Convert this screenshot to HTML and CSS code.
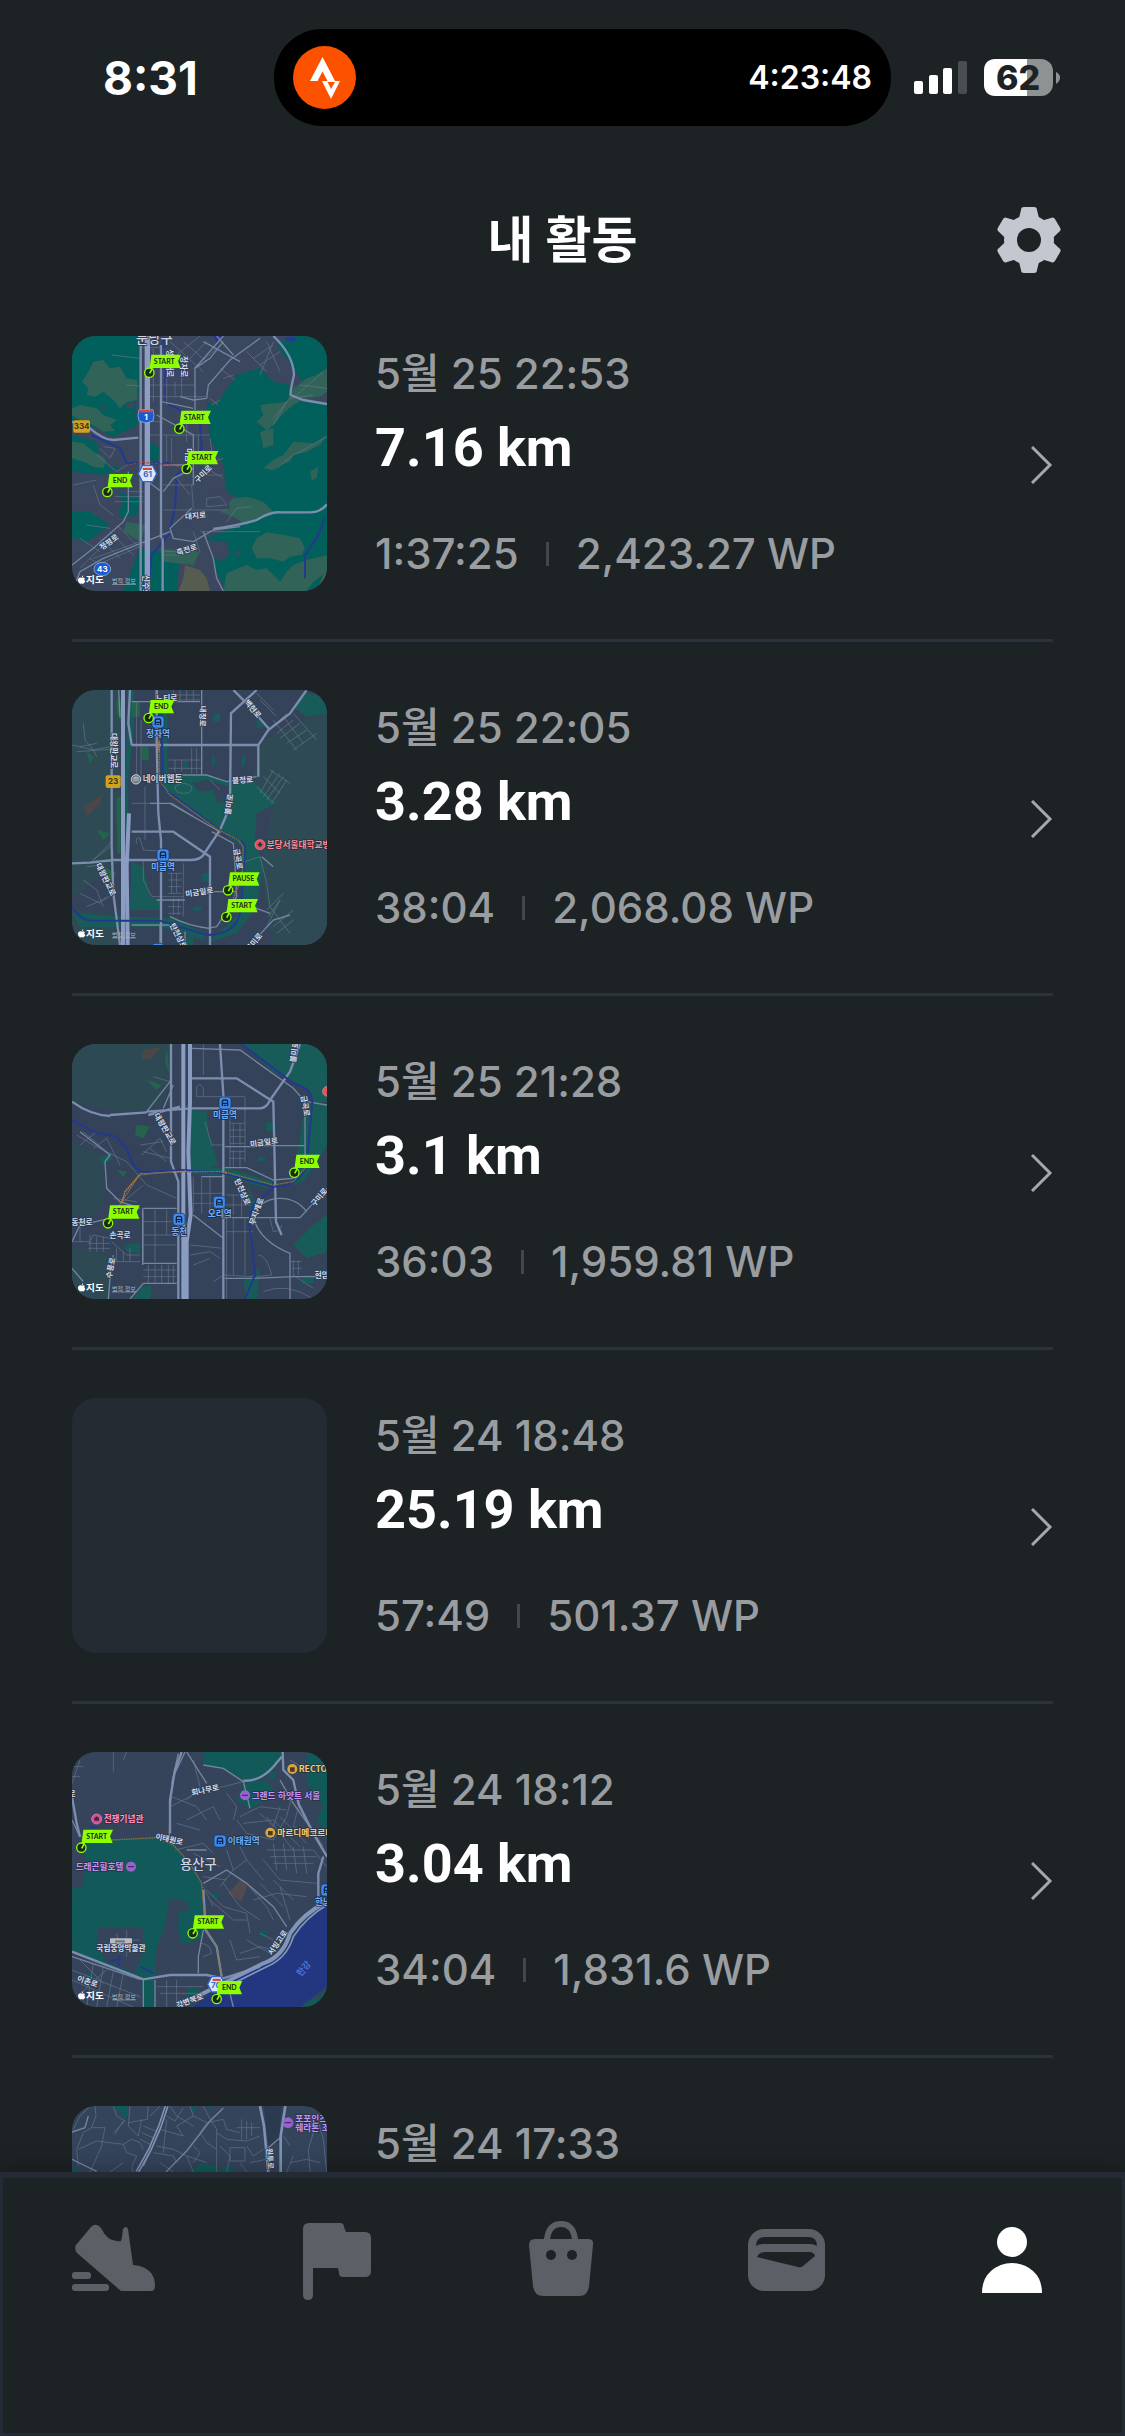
FILE: index.html
```html
<!DOCTYPE html>
<html lang="ko">
  <head>
    <meta charset="utf-8">
    <title>내 활동</title>
    <meta name="viewport" content="width=device-width">
    <link rel="stylesheet" href="styles.css">
  </head>

  <body>
    <!-- shared map parts -->
    <svg class="defs" aria-hidden="true">
      <defs>
        <g id="pin">
          <circle r="14" fill="#1b2a18" stroke="#8dff00" stroke-width="4"/>
          <path d="M1 2 L9 -12" stroke="#8dff00" stroke-width="5"/>
        </g>
        <g id="flag-long">
          <path d="M6 -54 H95 L86 -34 L94 -14 H10 L4 0 L0 -8 Z" fill="#8dff00"/>
          <use href="#pin"/>
        </g>
        <g id="flag-short">
          <path d="M6 -54 H77 L68 -34 L76 -14 H10 L4 0 L0 -8 Z" fill="#8dff00"/>
          <use href="#pin"/>
        </g>
        <g id="station">
          <rect x="-18" y="-18" width="36" height="36" rx="9" fill="#3f8bee" stroke="#16335f" stroke-width="2"/>
          <path d="M-8 10 V-4 Q-8 -9 -3 -9 H3 Q8 -9 8 -4 V10 M-8 1 H8 M-4 7 H4" fill="none" stroke="#10254a" stroke-width="4"/>
        </g>
        <g id="apple">
          <path d="M0 -6 C-5 -9 -11 -6 -11 1 C-11 7 -6 12 -3 11 Q0 10 3 11 C6 12 10 7 11 4 Q6 1 9 -5 Q5 -9 0 -6 Z M0 -7 Q0 -12 5 -14 Q5 -9 0 -7 Z" fill="#fff"/>
        </g>
      </defs>
    </svg>

    <header>
      <div class="status">
        <time class="clock">8:31</time>
        <div class="island">
          <svg class="strava" viewBox="0 0 63 63">
            <circle cx="31.500" cy="31.500" r="31.500" fill="#fc5200"/>
            <path d="M17 35 L29.500 11 L42 35 H34.500 L29.500 25.500 L24.500 35 Z M29 35 H47 L38 53 Z" fill="#fff"/>
            <path d="M34.500 36 H42 L38 43 Z" fill="#fc5200"/>
          </svg>
          <span>4:23:48</span>
        </div>
        <div class="indicators">
          <svg class="signal" viewBox="0 0 53 33">
            <g fill="#fff">
              <rect y="20" width="9" height="13" rx="2"/>
              <rect x="15" y="14" width="9" height="19" rx="2"/>
              <rect x="29" y="7" width="9" height="26" rx="2"/>
            </g>
            <rect x="44" width="9" height="33" rx="2" fill="#494e51"/>
          </svg>
          <svg class="battery" viewBox="0 0 76 37">
            <rect width="69" height="37" rx="12" fill="#8e9293"/>
            <path d="M12 0 H43 V37 H12 Q0 37 0 25 V12 Q0 0 12 0 Z" fill="#fff"/>
            <path d="M72 13 Q76 15 76 18.500 Q76 22 72 25 Z" fill="#8e9293"/>
            <text x="34" y="31" class="level">62</text>
          </svg>
        </div>
      </div>
      <div class="titlebar">
        <h1>내 활동</h1>
        <button class="settings" type="button" aria-label="설정">
          <svg viewBox="-33 -33 66 66">
            <g fill="#c4c7cf">
              <circle r="25"/>
              <path id="tooth" d="M-11 -18 L-8 -30 Q-8 -33 -5 -33 H5 Q8 -33 8 -30 L11 -18 Z"/>
              <use href="#tooth" transform="rotate(60)"/>
              <use href="#tooth" transform="rotate(120)"/>
              <use href="#tooth" transform="rotate(180)"/>
              <use href="#tooth" transform="rotate(240)"/>
              <use href="#tooth" transform="rotate(300)"/>
            </g>
            <circle r="12" fill="#1d2225"/>
          </svg>
        </button>
      </div>
    </header>

    <main>
      <ul class="activities">
        <li>
          <a href="#a1">
            <svg class="map" viewBox="36 33 765 765">
              <rect x="36" y="33" width="765" height="765" fill="#3a475f"/>
              <!-- hills -->
              <path fill="#02605c" d="M36 33 H240 V190 L225 250 L235 300 L160 335 L100 305 L36 290 Z M470 170 L510 180 L530 150 L600 130 L640 170 L690 180 L700 215 L801 240 V798 H500 L470 740 L440 640 L540 600 L580 545 L500 500 L490 420 L450 340 L440 240 Z M700 33 H801 V200 L740 190 L700 130 L650 60 Z M36 330 L110 350 L120 400 L180 430 L130 450 L36 440 Z M36 560 L90 560 L150 600 L80 650 L36 640 Z M255 340 L300 370 L290 415 L260 400 Z M240 670 L360 690 L350 798 L190 798 Z M170 500 L240 520 L230 570 L180 580 Z"/>
              <path fill="#316358" d="M100 110 L130 105 L150 130 L180 125 L200 160 L232 165 V225 L200 232 L180 250 L160 225 L130 200 L105 215 L80 210 L85 190 L66 170 L85 140 Z M60 240 L110 250 L130 270 L170 285 L150 300 L165 318 L130 320 L100 300 L60 285 L36 270 V250 Z M740 160 L770 150 L801 130 V200 L780 215 L740 218 L700 240 L670 265 L640 300 L620 315 L590 290 L610 270 L600 240 L640 235 L680 230 L700 190 Z M600 320 L640 310 L640 360 L610 370 Z M801 330 L780 360 L760 370 L740 380 L700 390 L690 410 L660 420 L640 436 L610 430 L640 405 L670 390 L700 350 L760 355 Z M590 640 L620 622 L660 628 L720 640 L735 670 L725 690 L690 695 L670 710 L630 700 L590 700 L575 670 Z M500 745 L560 720 L590 735 L620 730 L660 770 L680 740 L700 720 L740 705 L801 690 V740 L760 770 L740 798 H490 Z M36 350 L70 355 L100 380 L140 400 L130 430 L100 425 L70 410 L36 400 Z M200 590 L260 600 L240 650 L190 620 Z M520 520 L560 515 L610 530 L640 560 L600 575 L560 600 L520 575 L480 560 Z M300 670 L420 680 L400 720 L310 710 Z M750 440 L775 425 L770 460 L755 465 Z M430 410 L470 440 L440 460 Z"/>
              <path fill="#575c50" d="M375 720 L420 735 L440 760 L450 798 H355 L370 760 Z M790 750 L801 740 V798 H770 Z"/>
              <path fill="#3a475f" d="M80 480 L160 470 L190 540 L150 570 L90 540 Z M440 645 L500 650 L510 690 L480 710 L450 690 Z M440 170 L520 150 L510 175 L470 240 L440 230 Z M460 410 L490 430 L480 470 L430 460 Z M440 510 L500 505 L510 550 L440 570 Z M195 235 L225 230 L220 250 L200 248 Z M120 245 L135 240 L135 255 Z M115 365 L150 370 L190 410 L150 430 Z M525 675 L545 680 L530 695 Z"/>
              <path fill="#26369a" d="M460 33 H490 L470 50 Z M680 35 H705 V50 L675 45 Z"/>
              <path class="river" d="M310 40 L315 230 L420 290 L425 370 L350 450 L345 550 L325 630 L275 690 L265 790 M95 330 L180 370 L200 415 L330 415 M795 580 L770 640 L735 690 L735 760"/>
              <path class="street" d="M240 68 H305 M265 180 H405 M270 215 H440 M240 290 H310 M270 330 H450 M310 480 H400 M310 555 H500 M205 500 H250 M165 515 H250 M165 530 H250 M320 150 V240 M345 170 V215 M365 150 V215 M320 330 V410 M335 340 V410 M270 120 H320 M280 70 V230 M330 50 L430 140 M370 50 L440 110 M350 90 L420 33 M380 110 L440 50 M400 130 L470 70 M560 80 L620 140 M580 100 L640 60 M600 120 L660 80 M620 50 L660 140 M640 50 L600 150 M480 130 L525 165 M490 160 L520 150 M450 220 L475 240 M455 240 L480 225 M100 480 L120 540 L160 570 M40 480 L110 465 M80 600 L150 610 M60 640 L120 680 M120 640 L180 700 M150 620 L220 690 M170 600 L230 660 M90 700 L150 740 M130 660 L60 730 M120 370 L150 400 L165 370 L130 365 M110 390 L170 440 L200 420 M200 180 L240 183 M155 90 L240 100 M400 260 H380 V350 M415 330 V380 M450 340 L460 410 L490 400 M430 450 H490 M440 430 L490 460 M395 480 L400 550 M350 460 L390 510 M440 520 L480 515 L500 540 L440 545 Z M500 590 L530 550 L575 545 M640 280 L690 220 L760 210 M680 230 L640 300 M710 210 L790 140 M720 180 L801 190 M801 335 L740 370 L700 390 L650 430 M310 680 H400 M310 690 H360 M400 620 L420 680 M420 620 H600 M100 700 L240 650 M110 720 L250 660"/>
              <path class="road" d="M405 255 V130 L490 33 M405 130 L450 100 L490 50 M440 220 L445 180 L510 105 L600 40 M430 50 L540 110 M470 33 L520 90 M360 215 L400 225 L440 220 M290 270 L400 330 L400 480 M310 500 L340 460 L400 430 M310 420 H380 M395 550 L330 610 L340 640 L400 650 L460 615 L540 605 M36 720 L100 670 L190 590 L205 560 V440 M45 780 L60 740 L130 700 L330 620 M430 620 L460 700 L470 760 L490 798 M305 230 L400 250 M250 460 L305 500"/>
              <path class="road-main" d="M303 60 V640 M308 640 V798 M640 33 Q700 90 702 150 Q690 200 692 210 L730 225 L801 237 M36 290 L90 310 Q130 345 160 345 L235 338 M460 612 Q540 600 590 585 Q630 560 660 562 H740 Q780 565 801 538"/>
              <path d="M262 33 V798" stroke="#8f9dc4" stroke-width="16"/>
              <path class="road-main" d="M242 60 V798"/>
              <path d="M311 70 V230" stroke="#763a56" stroke-width="3"/>
              <path d="M195 422 L245 412 L320 418 L370 428" fill="none" stroke="#9b4141" stroke-width="3" stroke-dasharray="9 4"/>
              <!-- shields -->
              <rect x="40" y="286" width="50" height="37" rx="5" fill="#d2a21c"/>
              <text x="65" y="312" class="shield dark">334</text>
              <path d="M237 254 H279 Q285 272 279 288 L258 294 L237 288 Q231 272 237 254 Z" fill="#1b5bd0" stroke="#a9c1ee" stroke-width="2"/>
              <path d="M239 254 H277 V262 H239 Z" fill="#d6473c"/>
              <text x="258" y="284" class="shield">1</text>
              <path d="M247 422 H278 L290 446 L278 470 H247 L235 446 Z" fill="#dfe6f5" stroke="#2f69cf" stroke-width="4"/>
              <path d="M248 428 H276 V435 H248 Z" fill="#d6473c"/>
              <text x="263" y="457" class="shield blue">61</text>
              <ellipse cx="127" cy="732" rx="25" ry="20" fill="#1b5bd0" stroke="#a9c1ee" stroke-width="2"/>
              <text x="127" y="741" class="shield">43</text>
              <!-- names -->
              <text x="283" y="53" class="city">분당구</text>
              <text class="street-name" transform="translate(320 115) rotate(90)">성남대로</text>
              <text class="street-name" transform="translate(364 125) rotate(90)">정자로</text>
              <text class="street-name" transform="translate(379 390) rotate(90)">미금</text>
              <text class="street-name" transform="translate(435 452) rotate(-45)">구미로</text>
              <text class="street-name" transform="translate(407 580) rotate(-6)">대지로</text>
              <text class="street-name" transform="translate(383 682) rotate(-18)">죽전로</text>
              <text class="street-name" transform="translate(152 658) rotate(-36)">정평로</text>
              <text class="street-name" transform="translate(250 782) rotate(90)">신수로</text>
              <use href="#apple" x="65" y="765"/>
              <text x="78" y="775" class="brand">지도</text>
              <text x="156" y="774" class="legal">법적 정보</text>
              <use href="#flag-long" x="268" y="143"/>
              <text x="313" y="116" class="pin-name">START</text>
              <use href="#flag-long" x="358" y="311"/>
              <text x="403" y="284" class="pin-name">START</text>
              <use href="#flag-long" x="380" y="432"/>
              <text x="426" y="405" class="pin-name">START</text>
              <use href="#flag-short" x="142" y="501"/>
              <text x="180" y="474" class="pin-name">END</text>
            </svg>
            <div class="info">
              <span class="date">5월 25 22:53</span>
              <strong>7.16 km</strong>
              <span class="stats"><span>1:37:25</span><i></i><span>2,423.27 WP</span></span>
            </div>
            <svg class="chevron" viewBox="1 -1 22 40"><path d="M2 2 L20 20 L2 38"/></svg>
          </a>
        </li>

        <li>
          <a href="#a2">
            <svg class="map" viewBox="36 30 765 765">
              <rect x="36" y="30" width="765" height="765" fill="#34435a"/>
              <path fill="#2e4b55" d="M36 30 H180 V470 L150 560 L60 640 L36 640 Z M610 180 L801 90 V795 H640 L600 560 L640 380 L580 290 Z M36 690 L150 700 L180 795 H36 Z"/>
              <path fill="#185c5a" d="M202 30 H222 L222 130 L205 300 V430 L195 540 V400 Z M303 60 H322 V290 L440 285 L520 310 L580 300 L650 370 L590 400 L585 480 L610 560 L590 680 L530 760 L440 790 L540 700 L545 500 L310 330 Z M215 545 L250 560 L270 650 L300 660 V690 L210 690 Z M740 40 L801 50 V100 L740 110 L700 80 Z M36 700 L210 710 L330 715 L440 760 L430 780 L300 740 L60 740 Z M590 100 L620 140 L590 145 Z M455 230 H466 V255 H455 Z M545 228 H555 V255 H545 Z M370 243 H384 V263 H370 Z M460 100 H480 V125 H460 Z M425 580 H448 V605 H425 Z M400 680 H425 V693 H400 Z M365 770 H400 V795 H365 Z"/>
              <path fill="#34435a" d="M395 310 L440 300 L510 320 L515 380 L500 370 L470 365 L460 330 L420 335 Z"/>
              <path fill="#25644c" d="M216 66 H240 V110 H216 Z M245 200 H266 V240 H245 Z M170 60 H185 V130 L170 100 Z M80 215 L100 230 L90 250 Z M110 450 L150 460 L130 480 Z M130 560 L170 580 L150 600 Z M170 350 H182 V520 H172 Z"/>
              <path fill="#4b4648" d="M72 380 L130 340 L120 370 L80 410 Z"/>
              <path class="street" d="M325 60 H420 M325 45 H420 M340 30 V60 M360 30 V60 M380 30 V60 M400 30 V60 M325 240 H425 M345 240 V275 M365 240 V275 M395 205 V280 M410 205 V280 M325 265 H425 M215 370 H300 M230 65 V300 M243 120 V300 M255 320 V480 M250 510 L330 515 M250 545 V600 L275 650 H370 M325 580 H365 M325 600 H365 M325 620 H365 M325 640 H365 M335 580 V640 M350 580 V640 M325 660 H365 M325 680 H365 M325 700 H365 M340 655 V705 M355 655 V705 M370 550 V710 M230 490 Q225 470 240 475 L250 510 M345 320 Q370 300 395 320 Q400 340 370 340 Q345 340 345 320 M450 300 L480 330 M36 195 L100 210 L150 200 M60 200 L110 190 M50 215 L150 208 M70 130 L75 180 L100 210 L110 230 M100 540 L150 500 M90 550 L160 480 M110 540 L140 610 M80 560 L130 555 M70 600 L110 630 L130 680 M80 680 L150 650 M60 640 L120 670 L140 650 M640 140 L680 100 M650 160 L700 120 M660 175 L720 130 M680 190 L740 150 M700 210 L770 160 M640 120 L710 210 M670 110 L730 190 M700 100 L770 180 M600 60 L650 110 M590 40 L640 90 M600 340 L640 270 M610 350 L660 280 M620 360 L670 290 M635 370 L680 300 M590 320 L640 370 M610 290 L660 340 M630 270 L690 310 M620 690 L670 640 M625 710 L660 660 M640 740 L700 690 M650 760 L700 720 M630 680 L690 760 M660 660 L620 740 M540 550 L600 530 L620 610 L630 680"/>
              <path class="road" d="M215 65 H420 M425 30 V285 M455 455 L520 490 L525 560 L530 650 L470 740 L440 745 M290 660 H375 M215 735 H330 M330 710 Q390 740 450 745 M330 370 L470 450 M300 285 H440 L500 305 L590 290 M455 635 H530 M300 735 V795 M375 755 V795 M270 370 H335 L400 410 M210 30 V65 M520 660 L630 700 M570 795 L640 720 L690 705 M640 560 L605 530 M180 110 L176 30"/>
              <path class="road-main" d="M215 195 H595 M290 30 V190 L295 400 L303 480 V795 M215 455 H340 L450 530 V795 M36 550 L90 548 L160 540 H390 Q420 540 430 525 L480 450 L510 380 L513 100 L590 30 M595 290 V195 L625 150 L690 100 L740 30 M520 30 L560 70 L630 150 M155 30 V500 L160 640 L180 795 M210 30 L205 130 L215 195"/>
              <path d="M189 30 V795 M207 400 L200 560 L203 795" fill="none" stroke="#8b9cc3" stroke-width="12"/>
              <path class="river" d="M36 680 Q60 725 110 722 L300 722 L440 765 Q530 765 543 690 L555 500 Q550 480 500 465 L310 325 L303 60"/>
              <path class="track" d="M297 110 L298 300 L330 345 L475 450 L535 480 L550 500 L547 590 L500 705"/>
              <path class="track hot" d="M297 185 V215 M470 450 L482 460"/>
              <rect x="137" y="286" width="45" height="38" rx="6" fill="#d2a21c"/>
              <text x="159" y="313" class="shield dark">23</text>
              <text class="street-name" transform="translate(320 62)">느티로</text>
              <text class="street-name" transform="translate(420 108) rotate(92)">내정로</text>
              <text class="street-name" transform="translate(572 92) rotate(50)">백현로</text>
              <text class="street-name" transform="translate(152 212) rotate(90)">대왕판교로</text>
              <text class="street-name" transform="translate(130 602) rotate(64)">대왕판교로</text>
              <text class="street-name" transform="translate(548 308) rotate(-4)">불정로</text>
              <text class="street-name" transform="translate(515 374) rotate(-82)">불미로</text>
              <text class="street-name" transform="translate(526 538) rotate(80)">금곡로</text>
              <text class="street-name" transform="translate(419 644) rotate(-8)">미금일로</text>
              <text class="street-name" transform="translate(348 772) rotate(62)">탄천상로</text>
              <text class="street-name" transform="translate(588 792) rotate(-50)">구미로</text>
              <circle cx="228" cy="298" r="14" fill="#6d7784" stroke="#c6ccd6" stroke-width="3"/>
              <path d="M222 304 V292 H234 V304 M228 294 V304" fill="none" stroke="#e3e6ec" stroke-width="2"/>
              <text x="248" y="307" class="place">네이버웹툰</text>
              <use href="#station" x="294" y="126"/>
              <text x="294" y="171" class="station-name">정자역</text>
              <use href="#station" x="309" y="525"/>
              <text x="309" y="570" class="station-name">미금역</text>
              <use href="#station" x="294" y="808"/>
              <circle cx="600" cy="494" r="15" fill="#e0525f" stroke="#f0939a" stroke-width="2"/>
              <path d="M593 494 H607 M600 487 V501" stroke="#2a2f3c" stroke-width="5"/>
              <text x="620" y="503" class="place red">분당서울대학교병원</text>
              <use href="#apple" x="65" y="761"/>
              <text x="78" y="771" class="brand">지도</text>
              <text x="156" y="770" class="legal">법적 정보</text>
              <use href="#flag-short" x="266" y="114"/>
              <text x="304" y="87" class="pin-name">END</text>
              <use href="#flag-long" x="504" y="631"/>
              <text x="550" y="604" class="pin-name">PAUSE</text>
              <use href="#flag-long" x="499" y="711"/>
              <text x="545" y="684" class="pin-name">START</text>
            </svg>
            <div class="info">
              <span class="date">5월 25 22:05</span>
              <strong>3.28 km</strong>
              <span class="stats"><span>38:04</span><i></i><span>2,068.08 WP</span></span>
            </div>
            <svg class="chevron" viewBox="1 -1 22 40"><path d="M2 2 L20 20 L2 38"/></svg>
          </a>
        </li>

        <li>
          <a href="#a3">
            <svg class="map" viewBox="36 27 765 765">
              <rect x="36" y="27" width="765" height="765" fill="#34435a"/>
              <path fill="#2d4a54" d="M36 27 H330 V150 L300 210 L200 235 L36 200 Z M36 320 L130 370 L130 500 L100 540 L36 540 Z M36 640 L150 650 L150 792 H36 Z"/>
              <path fill="#185c5a" d="M395 225 L440 230 L445 290 L475 390 L440 400 L390 400 L385 300 Z M545 27 H801 V200 L760 205 L750 165 L640 110 Z M735 200 L801 210 V330 L760 400 L730 440 L700 450 Z M390 395 L500 400 L640 440 L620 460 L500 425 L390 415 Z M700 630 L760 570 L801 540 V650 L740 670 Z M565 440 L580 500 L600 510 L570 550 Z M245 755 L275 750 L270 792 H220 Z M115 370 L150 355 L160 370 L130 390 Z M550 740 L600 700 L590 792 H560 Z M190 630 L240 625 V655 L200 650 Z M618 262 H640 V288 H618 Z M595 365 H615 V378 H595 Z M730 720 H760 V745 H725 Z"/>
              <path fill="#25644c" d="M320 40 L330 120 L315 80 Z M260 135 L305 150 L290 165 Z M170 405 L200 410 L190 425 Z M230 270 L270 275 L250 310 L225 300 Z"/>
              <path fill="#4b4648" d="M250 45 L305 35 L270 75 L245 70 Z"/>
              <path class="street" d="M430 27 V120 M410 155 Q420 140 430 160 V185 L410 185 Z M430 185 H555 V380 M435 260 L455 330 H490 M510 265 H555 M510 285 H555 M510 305 H555 M510 325 H555 M520 265 V330 M540 265 V330 M510 350 H555 M510 370 H555 M520 345 V395 M540 345 V395 M510 240 V400 M250 350 L330 370 M245 360 L300 310 L320 350 M240 330 L310 320 M270 340 L320 380 M200 380 L260 450 L350 490 M60 330 L110 290 M100 340 L140 310 L180 390 M50 300 L100 330 L200 380 M140 350 L70 290 M160 490 L230 500 M190 500 L250 450 M36 620 H90 L100 600 L150 610 M90 600 V650 M110 605 V650 M130 605 V650 M60 570 V620 M85 625 H150 M85 640 H150 M155 620 L200 660 H240 M170 640 V680 M190 650 V680 M210 640 V680 M155 680 H240 M250 530 V680 M285 525 V680 M320 525 V600 M250 560 H350 M250 600 H350 M250 630 H350 M265 690 V745 M285 690 V745 M305 690 V745 M325 690 V745 M340 690 V745 M250 705 H350 M250 725 H350 M400 425 V530 M425 425 V535 M450 425 V530 M400 475 H490 M400 505 H490 M390 630 L490 640 M390 660 L450 650 L480 670 M400 690 L450 670 M460 740 L490 720 L580 725 M500 480 H560 M520 480 V540 M545 490 V550 M495 510 H570 M500 545 V790 M520 550 V720 M555 550 V720 M500 590 H580 M595 660 Q620 660 635 720 L590 725 M630 550 L640 590 Q660 590 665 570 M690 680 H725 M700 675 V720 M715 675 V720 M695 700 H725 M700 720 L760 760 M610 770 Q680 740 760 792 M280 125 L330 140"/>
              <path class="road" d="M395 40 L540 45 L700 160 L735 200 V370 M590 332 H735 M495 335 H590 M425 425 H490 M495 398 H560 L640 435 L700 430 M580 548 Q600 490 660 490 Q710 490 740 530 M580 548 Q600 620 690 655 V792 M495 548 H720 L801 460 M250 520 H350 M248 520 V690 M160 660 L150 730 L145 792 M36 620 L60 570 L150 550 M135 380 L140 460 L180 500 L240 520 M60 290 L150 360 L135 380 M495 730 H580 L700 725 L790 725 M740 200 L801 210 M250 685 H350 M250 745 H350 M210 792 L250 745 M310 220 L340 150 M260 230 L330 140 M36 700 L70 740 M240 415 L340 410 M400 540 L490 610"/>
              <path class="road-main" d="M395 130 H530 L640 200 L648 560 L665 600 M480 27 L490 180 V792 M395 220 H600 Q620 220 630 195 L690 110 L720 27 M36 200 Q90 240 150 243 M260 230 L395 220 M333 27 V380 L355 440 V792 M150 240 L260 232 M265 240 L360 215"/>
              <path d="M370 27 V792 M390 27 V200 L385 350 L392 540 L380 620 V792" fill="none" stroke="#8b9cc3" stroke-width="12"/>
              <path class="river" d="M36 255 L100 290 L170 305 L200 340 L220 390 L245 412 L370 405 L490 415 L560 435 L640 455 Q720 455 740 390 L757 200 Q755 160 700 145 L545 27 M640 460 L580 510 Q560 560 575 620 L585 720 L555 792"/>
              <path class="track" d="M150 555 L185 500 L238 420 L340 410 L490 410 L640 450 L700 440 L735 400"/>
              <path class="track hot" d="M185 505 L195 470 L238 420 M338 412 L380 408 M488 412 L500 414"/>
              <text class="street-name" transform="translate(711 52) rotate(-82)">불미로</text>
              <text class="street-name" transform="translate(728 214) rotate(80)">금곡로</text>
              <text class="street-name" transform="translate(308 286) rotate(60)">대왕판교로</text>
              <text class="street-name" transform="translate(613 330) rotate(-8)">미금일로</text>
              <text class="street-name" transform="translate(540 474) rotate(66)">탄천상로</text>
              <text class="street-name" transform="translate(597 532) rotate(-70)">무지개로</text>
              <text class="street-name" transform="translate(784 492) rotate(-50)">구미로</text>
              <text class="street-name" transform="translate(66 570)">동천로</text>
              <text class="street-name" transform="translate(180 608)">손곡로</text>
              <text class="street-name" transform="translate(160 700) rotate(-78)">수풍로</text>
              <text class="street-name" transform="translate(796 728)">현암로</text>
              <use href="#station" x="495" y="204"/>
              <text x="495" y="248" class="station-name">미금역</text>
              <use href="#station" x="478" y="502"/>
              <text x="479" y="547" class="station-name">오리역</text>
              <use href="#station" x="357" y="553"/>
              <text x="358" y="599" class="station-name">동천</text>
              <circle cx="803" cy="169" r="15" fill="#e0525f" stroke="#f0939a" stroke-width="2"/>
              <use href="#apple" x="65" y="758"/>
              <text x="78" y="768" class="brand">지도</text>
              <text x="156" y="767" class="legal">법적 정보</text>
              <use href="#flag-short" x="703" y="413"/>
              <text x="741" y="386" class="pin-name">END</text>
              <use href="#flag-long" x="144" y="565"/>
              <text x="190" y="538" class="pin-name">START</text>
            </svg>
            <div class="info">
              <span class="date">5월 25 21:28</span>
              <strong>3.1 km</strong>
              <span class="stats"><span>36:03</span><i></i><span>1,959.81 WP</span></span>
            </div>
            <svg class="chevron" viewBox="1 -1 22 40"><path d="M2 2 L20 20 L2 38"/></svg>
          </a>
        </li>

        <li>
          <a href="#a4">
            <div class="map"></div>
            <div class="info">
              <span class="date">5월 24 18:48</span>
              <strong>25.19 km</strong>
              <span class="stats"><span>57:49</span><i></i><span>501.37 WP</span></span>
            </div>
            <svg class="chevron" viewBox="1 -1 22 40"><path d="M2 2 L20 20 L2 38"/></svg>
          </a>
        </li>

        <li>
          <a href="#a5">
            <svg class="map" viewBox="36 36 765 765">
              <rect x="36" y="36" width="765" height="765" fill="#35445a"/>
              <path fill="#125a59" d="M75 300 L290 295 L340 315 L390 370 L425 430 L432 590 L370 615 L355 580 V510 L325 500 L315 560 L290 620 L285 710 L250 712 L200 700 L36 630 V445 L65 445 L80 380 Z M430 36 H665 L650 80 L600 120 L550 120 L490 85 L432 75 Z M555 125 L620 120 L640 150 L600 190 L570 205 L530 180 Z M740 36 H801 V300 L770 240 L790 200 L740 130 Z M630 95 H648 V120 H630 Z M455 460 L475 458 L480 475 L460 478 Z M598 572 H622 V590 H598 Z M385 740 L415 745 L410 790 L380 790 Z M80 700 L100 705 L95 720 L80 715 Z M245 720 H285 V801 H250 Z"/>
              <path fill="#35445a" d="M115 562 H248 V640 L225 700 L140 670 L110 610 Z M325 475 L385 485 V510 L330 520 Z"/>
              <path fill="#514a51" d="M505 460 L540 420 L565 430 L545 485 Z"/>
              <!-- Han river -->
              <path fill="#22377f" d="M801 490 L760 520 L710 570 L670 640 L500 720 L400 801 H720 L801 740 Z"/>
              <path fill="#125a59" d="M730 790 L780 770 L801 740 V801 H735 Z"/>
              <path class="river" d="M90 262 H110 M145 665 L170 660 M260 690 L275 695 M180 645 L175 680 M240 680 L280 700"/>
              <path class="street" d="M160 36 V95 M200 36 L190 60 M36 130 L60 60 M36 110 H60 M36 80 H70 M330 200 L410 160 L550 125 M335 170 L410 200 L440 240 M400 60 L420 140 L380 180 M380 240 L460 200 L480 240 M350 250 L420 270 M345 330 L430 310 L460 340 M500 160 L530 200 L520 240 M540 230 L600 200 L680 210 M550 250 L640 240 M530 240 L560 280 L640 300 M600 220 L640 260 L660 200 M620 230 L700 330 M640 240 L720 320 M660 230 L740 310 M620 330 H760 M630 350 H770 M640 370 H760 M640 310 L650 390 M670 310 L680 390 M700 320 L710 400 M730 320 L740 400 M610 360 L660 420 L770 430 M500 330 L520 390 L480 440 M520 390 L560 360 L610 420 M560 360 L540 320 M440 450 L490 500 L560 520 L570 580 M450 480 L520 540 H560 M430 440 L460 500 M490 430 L540 500 L600 540 M560 430 L620 500 L640 540 M600 430 L670 500 M640 420 L700 480 M660 440 L690 540 M580 480 L650 460 L740 470 M600 580 L640 600 M560 600 L630 640 M540 640 L600 620 L640 630 M510 600 L530 660 L600 650 M420 610 Q450 610 455 640 L430 650 M430 410 L500 420 M400 340 L480 380 M60 660 L130 730 M100 670 L80 801 M130 680 L110 801 M160 695 L140 801 M36 690 L240 770 M36 720 L220 801 M190 700 L170 801 M290 740 H430 M300 760 H420 M320 720 V801 M350 720 V801 M60 760 L140 690 M170 580 L180 640 M200 570 V650 M160 600 H240 M690 60 L740 90 M700 150 L680 230 L640 300 M720 180 L700 260 L760 290 M740 240 L790 320 M760 330 L800 380"/>
              <path class="road" d="M375 36 L340 110 L330 200 L328 290 M355 40 L335 130 M430 75 L490 85 L550 125 L570 205 M440 330 H380 M430 430 L500 390 L560 430 L640 500 L680 560 M430 570 L415 650 V700 M36 240 L60 290 M36 650 L240 718 M660 120 L700 190 L770 290 M285 720 V801 M250 720 V801 M500 720 L520 801 M380 36 L440 130"/>
              <path class="road-main" d="M365 36 L345 90 L330 180 V280 M550 122 Q600 125 640 80 L665 50 M668 36 L670 90 L700 120 L715 190 L760 280 L801 350 M36 635 L250 718 L330 705 H440 L490 715 L600 680 M36 170 L50 250 L60 290 M775 480 V400 L790 350 M430 450 L437 570 L470 620 L485 710"/>
              <path d="M801 485 Q730 520 690 580 Q670 650 610 670 L490 730 L360 795" fill="none" stroke="#8295b8" stroke-width="12"/>
              <path d="M801 495 Q740 530 700 590 Q680 655 620 680 L500 740" fill="none" stroke="#8295b8" stroke-width="5"/>
              <path class="track" d="M100 303 L290 293 L340 315 L390 370 L425 430 L437 570 L470 620 L485 705"/>
              <path d="M455 710 H483 L495 733 L483 756 H455 L443 733 Z" fill="#dfe6f5" stroke="#2f69cf" stroke-width="4"/>
              <path d="M458 716 H482 V723 H458 Z" fill="#d6473c"/>
              <text x="468" y="744" class="shield blue">70</text>
              <text class="street-name" transform="translate(437 158) rotate(-12)">회나무로</text>
              <text class="street-name" transform="translate(326 306) rotate(12)">이태원로</text>
              <text class="street-name" transform="translate(80 732) rotate(18)">이촌로</text>
              <text class="street-name" transform="translate(392 790) rotate(-20)">강변북로</text>
              <text class="street-name" transform="translate(660 612) rotate(-56)">서빙고로</text>
              <text class="street-name" transform="translate(36 170)">로</text>
              <text class="water" transform="translate(738 692) rotate(-50)">한강</text>
              <text x="415" y="387" class="city">용산구</text>
              <rect x="150" y="595" width="66" height="17" rx="2" fill="#b9bdc2"/>
              <path d="M165 604 H195" stroke="#70777f" stroke-width="7"/>
              <text class="street-name" transform="translate(183 634)">국립중앙박물관</text>
              <circle cx="110" cy="237" r="15" fill="#d54f95" stroke="#f08cc0" stroke-width="2"/>
              <path d="M103 242 V234 L110 229 L117 234 V242 Z" fill="#49233f"/>
              <text x="131" y="246" class="place pink">전쟁기념관</text>
              <text x="47" y="390" class="place purple">드래곤힐호텔</text>
              <circle cx="213" cy="380" r="15" fill="#9a62cf"/>
              <path d="M204 380 H222" stroke="#4a2b6b" stroke-width="4"/>
              <circle cx="555" cy="166" r="15" fill="#9a62cf"/>
              <path d="M546 166 H564" stroke="#4a2b6b" stroke-width="4"/>
              <text x="575" y="176" class="place purple">그랜드 하얏트 서울</text>
              <circle cx="697" cy="87" r="15" fill="#d9a545"/>
              <path d="M690 82 H704 V95 H690 Z" fill="#4b3a1d"/>
              <text x="716" y="97" class="place gold">RECTO</text>
              <circle cx="631" cy="278" r="15" fill="#d9a545"/>
              <path d="M624 273 H638 V286 H624 Z" fill="#4b3a1d"/>
              <text x="652" y="287" class="place gold">마르디메크르디</text>
              <use href="#station" x="480" y="303"/>
              <text x="551" y="312" class="station-name">이태원역</text>
              <use href="#station" x="801" y="450"/>
              <text x="801" y="495" class="station-name">한남역</text>
              <use href="#apple" x="65" y="767"/>
              <text x="78" y="777" class="brand">지도</text>
              <text x="156" y="776" class="legal">법적 정보</text>
              <use href="#flag-long" x="64" y="323"/>
              <text x="110" y="296" class="pin-name">START</text>
              <use href="#flag-long" x="398" y="580"/>
              <text x="444" y="553" class="pin-name">START</text>
              <use href="#flag-short" x="470" y="777"/>
              <text x="508" y="750" class="pin-name">END</text>
            </svg>
            <div class="info">
              <span class="date">5월 24 18:12</span>
              <strong>3.04 km</strong>
              <span class="stats"><span>34:04</span><i></i><span>1,831.6 WP</span></span>
            </div>
            <svg class="chevron" viewBox="1 -1 22 40"><path d="M2 2 L20 20 L2 38"/></svg>
          </a>
        </li>

        <li>
          <a href="#a6">
            <svg class="map" viewBox="36 30 765 765">
              <rect x="36" y="30" width="765" height="765" fill="#34445b"/>
              <path fill="#125a59" d="M165 30 H200 L205 60 L190 68 L180 45 L162 42 Z M400 30 H412 L400 55 L392 50 Z M440 30 H455 L445 38 Z M385 228 L425 203 L470 208 V228 Z M485 213 L520 212 V228 H485 Z M36 212 L70 228 H36 Z"/>
              <path fill="#2c3a4f" d="M612 30 H665 L655 140 L625 150 Z"/>
              <path class="street" d="M90 30 L60 60 L40 100 M105 30 L108 60 L95 95 L70 110 L50 160 L55 210 M95 95 H135 L125 150 L90 228 M55 160 L110 135 L190 145 L215 130 L240 140 L250 160 M160 30 L170 60 L195 75 L160 110 M190 75 L180 90 L165 115 M210 30 L205 90 L235 120 L245 70 M265 30 L262 70 L205 80 M190 145 L200 170 L230 180 L215 215 L220 228 M270 60 L300 30 M250 90 L300 110 M245 110 L290 130 M240 130 L280 150 M330 30 L350 60 L400 90 M320 60 L345 75 L370 35 M300 100 L370 120 L350 90 L400 60 L390 30 M320 70 L310 170 M290 150 L340 160 L380 180 L440 200 M280 170 L340 180 L350 200 M400 60 L440 80 L490 70 M430 30 L445 60 L470 100 V228 M440 80 L420 110 L440 140 L470 160 M470 110 L500 130 L560 135 L600 120 M490 70 L500 100 L540 110 M545 70 V130 M560 75 V130 M575 80 V120 M530 95 H600 M510 155 H555 V195 H510 Z M480 150 L510 180 L500 228 M400 150 L420 170 L400 200 M380 180 L400 228 M560 150 L580 180 L610 160 M570 200 L620 190 M540 200 L560 228 M750 60 L760 110 L745 160 L750 228 M770 60 L790 130 L800 228 M690 200 L740 190 L780 200 M670 120 L690 150 M680 228 L700 180 M300 200 L340 228 M150 228 L190 200"/>
              <path class="road" d="M36 108 L75 95 L85 60 M36 190 L110 226 M318 228 L380 165 L450 75 L490 36 M250 210 L300 100 M625 155 L660 125"/>
              <path d="M320 30 L300 90 L270 160 L232 228" fill="none" stroke="#8293b4" stroke-width="12"/>
              <path d="M320 30 L300 90 L270 160 L232 228" fill="none" stroke="#3a4a63" stroke-width="3"/>
              <path d="M600 30 L612 90 L625 228 M676 30 L662 120 V228" fill="none" stroke="#7f91b3" stroke-width="8"/>
              <text class="street-name" transform="translate(622 188) rotate(86)">원투로</text>
              <circle cx="684" cy="80" r="16" fill="#9a62cf"/>
              <path d="M674 80 H694" stroke="#4a2b6b" stroke-width="4"/>
              <text x="706" y="77" class="place purple">포포인츠</text>
              <text x="706" y="104" class="place purple">쉐라톤 조선</text>
            </svg>
            <div class="info">
              <span class="date">5월 24 17:33</span>
            </div>
          </a>
        </li>
      </ul>
    </main>

    <nav>
      <a href="#run" aria-label="운동">
        <svg viewBox="0 0 84 84">
          <path d="M4 27 L19 9 Q24 4 29 10 Q36 25 49 23 Q50 20 51 11 Q54 7 56 11 L61 47 Q83 49 83 68 Q83 73 79 73 H49 L5 35 Q2 31 4 27 Z"/>
          <rect y="54" width="19" height="7" rx="3"/>
          <rect y="66" width="37" height="7" rx="3"/>
        </svg>
      </a>
      <a href="#challenge" aria-label="챌린지">
        <svg viewBox="0 0 84 84">
          <path d="M7 11 Q7 5 13 5 H44 Q48 5 48 9 L50 14 H69 Q75 14 75 20 V53 Q75 59 69 59 H47 Q43 59 43 55 L42 50 H17 V77 Q17 82 12 82 Q7 82 7 77 Z"/>
        </svg>
      </a>
      <a href="#shop" aria-label="상점">
        <svg viewBox="0 0 84 84">
          <path d="M26 24 V21 Q28 6 40 6 Q52 6 54 21 V24" fill="none" stroke="#5a6066" stroke-width="6"/>
          <path d="M14 21 H67 Q73 21 72 27 L68 68 Q67 78 58 78 H23 Q13 78 12 68 L8 27 Q8 21 14 21 Z"/>
          <circle cx="30" cy="37" r="5" fill="#1d2225"/>
          <circle cx="51" cy="37" r="5" fill="#1d2225"/>
        </svg>
      </a>
      <a href="#wallet" aria-label="지갑">
        <svg viewBox="0 0 84 84">
          <rect x="3" y="11" width="77" height="62" rx="16"/>
          <path d="M11 28 Q11 19 20 19 H63 Q72 19 72 28 Q69 26 65 26 H18 Q14 26 11 28 Z M12 39 Q14 34 20 34 H64 Q69 34 70 38 L58 48 Q56 50 53 49 Z" fill="#1d2225"/>
        </svg>
      </a>
      <a href="#me" class="active" aria-label="내 정보">
        <svg viewBox="0 0 84 84">
          <circle cx="43" cy="24" r="15"/>
          <path d="M13 75 Q13 61 22 53 Q31 45 43 45 Q55 45 64 53 Q73 61 73 75 Z"/>
        </svg>
      </a>
    </nav>
  </body>
</html>
```

FILE: styles.css
```css
* { box-sizing: border-box; }
body { margin: 0; height: 100vh; display: flex; flex-direction: column;
     background-color: #1d2225; color: #fff;
     font-family: Inter, "Noto Sans CJK KR", sans-serif; }
a { color: inherit; text-decoration: none; }
svg { display: block; flex: none; }
.defs { position: absolute; width: 0; height: 0; }

/* status bar */
.status { display: flex; align-items: center; padding: 29px 65px 0 103px; }
.clock { width: 171px; font-size: 46px; font-weight: 700; line-height: 96px; }
.island { flex: 1; display: flex; align-items: center; justify-content: space-between;
     height: 97px; padding: 0 19px; border-radius: 48px; background-color: #000;
     font-size: 32px; font-weight: 600; }
.strava { width: 63px; height: 63px; }
.indicators { display: flex; align-items: center; gap: 17px; padding-left: 23px; }
.signal { width: 53px; height: 33px; }
.battery { width: 76px; height: 37px; overflow: visible; }
.level { font-size: 34px; font-weight: 800; text-anchor: middle; fill: #1d2225; }

/* title */
.titlebar { display: grid; grid-template-columns: 66px 1fr 66px; align-items: center;
     padding: 48px 63px 30px; height: 210px; }
.titlebar h1 { grid-column: 2; margin: 0; text-align: center; font-size: 50px;
     font-weight: 700; line-height: 80px; }
.settings { width: 66px; height: 66px; padding: 0; border: 0; background: none; }

/* list */
main { flex: 1; min-height: 0; overflow: hidden; padding: 0 72px; }
.activities { margin: 0; padding: 0; list-style: none; }
.activities li { padding-bottom: 48px; margin-bottom: 48px; border-bottom: 3px solid #2b323b; }
.activities a { display: flex; align-items: center; gap: 48px; }
.map { width: 255px; height: 255px; border-radius: 24px; background-color: #252b33; }
.info { flex: 1; display: flex; flex-direction: column; height: 255px; padding-top: 2px; }
.date { font-size: 42px; font-weight: 500; line-height: 72px; color: #999da0; }
.info strong { font-family: Roboto, sans-serif; font-size: 54px; font-weight: 700; line-height: 76px; }
.stats { display: flex; align-items: center; gap: 27px; margin-top: 32px;
     font-size: 42px; font-weight: 500; line-height: 72px; color: #999da0; }
.stats i { width: 3px; height: 24px; background-color: #43484c; }
.chevron { width: 22px; height: 40px; fill: none; stroke: #a6a9ab; stroke-width: 3; }

/* map drawing */
.street { fill: none; stroke: #66758c; stroke-width: 2; }
.road { fill: none; stroke: #7485a0; stroke-width: 4; }
.road-main { fill: none; stroke: #7d8dae; stroke-width: 7; }
.river { fill: none; stroke: #24388d; stroke-width: 6; }
.track { fill: none; stroke: #85733f; stroke-width: 4; stroke-dasharray: 5 2; }
.track.hot { stroke: #d1803a; }
.map text { font-family: "Noto Sans CJK KR", sans-serif; font-weight: 700; }
.map .street-name { font-size: 23px; fill: #d5ddec; text-anchor: middle;
     stroke: #2c3a4f; stroke-width: 4; paint-order: stroke; }
.map .city { font-size: 40px; font-weight: 500; fill: #cdd5e2; text-anchor: middle;
     stroke: #2c3a4f; stroke-width: 4; paint-order: stroke; }
.map .station-name { font-size: 26px; fill: #6eb0fb; text-anchor: middle;
     stroke: #1d2b45; stroke-width: 4; paint-order: stroke; }
.map .place { font-size: 26px; fill: #d0d4da; stroke: #26303f; stroke-width: 4; paint-order: stroke; }
.map .place.red { fill: #ff8a8f; }
.map .place.pink { fill: #ff8fcb; }
.map .place.purple { fill: #c792fb; }
.map .place.gold { fill: #f5ce68; }
.map .water { font-size: 27px; fill: #4a74dc; text-anchor: middle; }
.map .brand { font-size: 29px; fill: #fff; }
.map .legal { font-size: 18px; font-weight: 400; fill: #aab3c0; text-decoration: underline; }
.map .shield { font-family: Inter, sans-serif; font-size: 24px; fill: #fff; text-anchor: middle; }
.map .shield.dark { fill: #3b3524; }
.map .shield.blue { fill: #2f69cf; }
.map .pin-name { font-family: Lato, sans-serif; font-size: 21px;
     fill: #1b2a18; text-anchor: middle; }

/* tab bar */
nav { position: relative; display: flex; justify-content: space-between; align-items: flex-start;
     height: 264px; padding: 40px 69px 0; border: 3px solid #252b34; border-top-width: 6px;
     background-color: #1d2225; box-shadow: 0 0 24px rgba(0, 0, 0, 0.3); }
nav svg { width: 84px; height: 84px; fill: #5a6066; }
nav .active svg { fill: #fff; }
```
